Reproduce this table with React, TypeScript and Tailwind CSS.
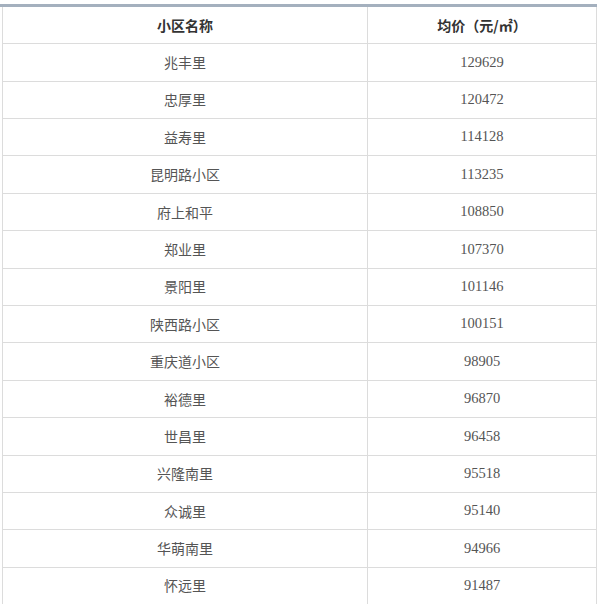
import React from "react";

const rows: [string, string][] = [
  ["兆丰里", "129629"],
  ["忠厚里", "120472"],
  ["益寿里", "114128"],
  ["昆明路小区", "113235"],
  ["府上和平", "108850"],
  ["郑业里", "107370"],
  ["景阳里", "101146"],
  ["陕西路小区", "100151"],
  ["重庆道小区", "98905"],
  ["裕德里", "96870"],
  ["世昌里", "96458"],
  ["兴隆南里", "95518"],
  ["众诚里", "95140"],
  ["华萌南里", "94966"],
  ["怀远里", "91487"],
];

const cjk = { fontFamily: '"Noto Sans CJK SC", "Liberation Sans", sans-serif' };

export default function App() {
  return (
    <div className="w-[599px] h-[604px] overflow-hidden bg-white pt-[4px]">
      <div className="h-[3px] w-[597px] bg-[#a4b0be]" />
      <div className="ml-[2px] w-[595px] border-x border-[#dcdcdc]">
        <div
          className="grid grid-cols-[365px_1fr] h-[37.3px] border-b border-[#dcdcdc] text-[14px] font-bold text-[#333]"
          style={cjk}
        >
          <div className="flex items-center justify-center border-r border-[#dcdcdc]">
            小区名称
          </div>
          <div className="flex items-center justify-center">均价（元/㎡）</div>
        </div>
        {rows.map(([name, price]) => (
          <div
            key={name}
            className="grid grid-cols-[365px_1fr] h-[37.4px] border-b border-[#dcdcdc]"
          >
            <div
              className="flex items-center justify-center border-r border-[#dcdcdc] text-[14px] text-[#555]"
              style={cjk}
            >
              {name}
            </div>
            <div className="flex items-center justify-center text-[14.5px] text-[#555] font-['Liberation_Serif',serif]">
              {price}
            </div>
          </div>
        ))}
      </div>
    </div>
  );
}
